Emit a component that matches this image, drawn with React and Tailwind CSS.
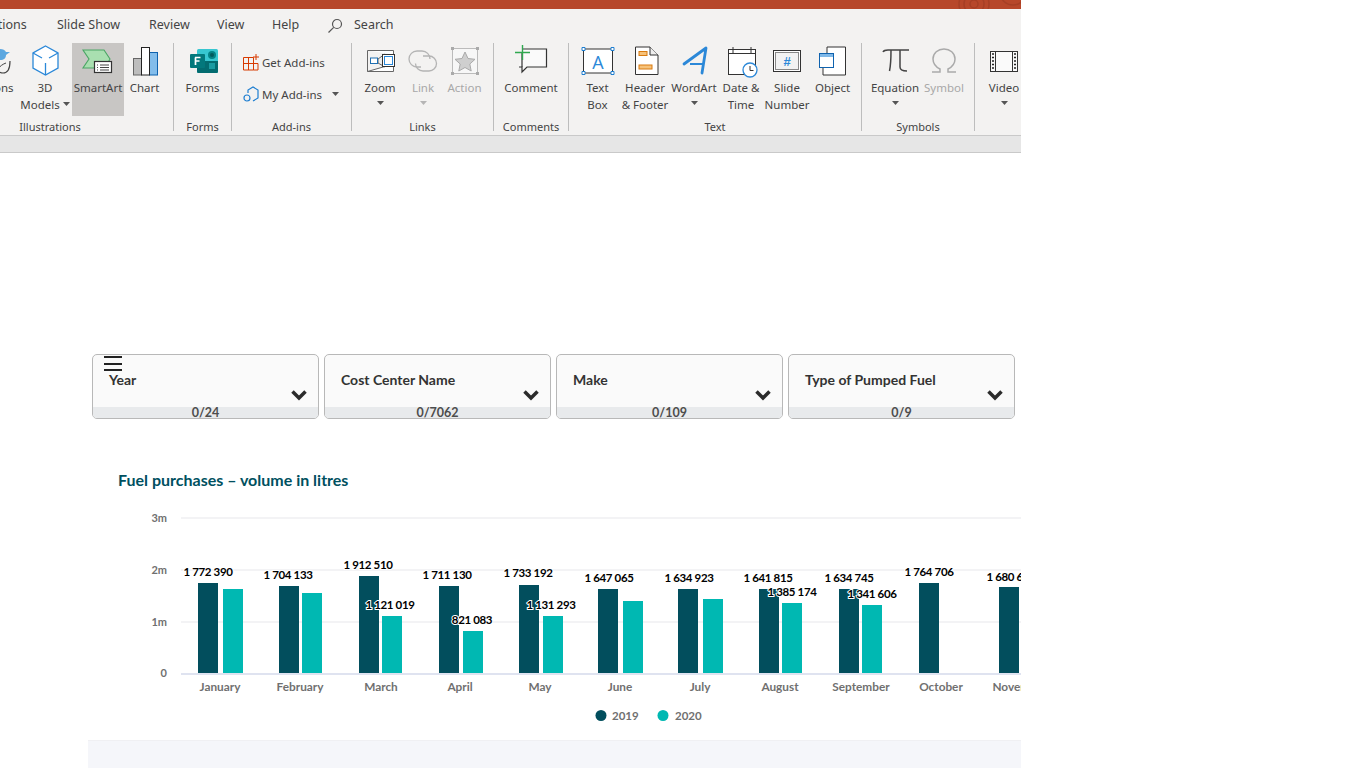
import React from 'react';

const Caret = ({ light }) => (
  <svg width="7" height="4" viewBox="0 0 7 4" className="inline-block">
    <path d="M0 0h7L3.5 4z" fill={light ? '#b5b5b5' : '#555'} />
  </svg>
);

// every ribbon icon is a 32x32 box centred over its label
const Icon = ({ children }) => (
  <svg width="32" height="32" viewBox="0 0 32 32" fill="none" className="overflow-visible">
    {children}
  </svg>
);

const icons = {
  partial: (
    <Icon>
      <path d="M17 4c3 0 5 1 6 3l4 0-4 3c0 3-2 5-6 5-3 0-5-2-5-5s2-6 5-6z" fill="#5ba7e0" />
      <path d="M11 15c0 7 3 13 9 13 5 0 7-5 7-12" stroke="#444" strokeWidth="1.2" />
      <path d="M15 24c2-3 5-5 8-6" stroke="#444" strokeWidth="1" />
    </Icon>
  ),
  cube: (
    <Icon>
      <path d="M16.5 1 29 8v15l-12.500 7L4 23V8z" fill="#fff" stroke="#2b88d8" strokeWidth="1.3" />
      <path d="M4 8l9 5M29 8l-9 5M16.500 18v12" stroke="#2b88d8" strokeWidth="1.3" />
    </Icon>
  ),
  smartArt: (
    <Icon>
      <path d="M1 5h21l6 9-5 9H1l6-9z" fill="#a9dfb0" stroke="#4aa564" strokeWidth="1.1" />
      <rect x="12.500" y="16.500" width="17" height="11" fill="#fff" stroke="#333" strokeWidth="1.2" />
      <path d="M15 20h1M18 20h9M15 22.500h1M18 22.500h9M15 25h1M18 25h9" stroke="#444" />
    </Icon>
  ),
  chart: (
    <Icon>
      <rect x="4.500" y="13.500" width="8" height="16.500" fill="#bdbdbd" stroke="#666" />
      <rect x="20.500" y="7.500" width="8" height="22.500" fill="#83bdeb" stroke="#0f62ae" />
      <rect x="12.500" y="2.500" width="8" height="27.500" fill="#fff" stroke="#222" />
    </Icon>
  ),
  forms: (
    <Icon>
      <rect x="10" y="4" width="21" height="24" rx="1.500" fill="#37c6d0" />
      <path d="M10 16h21v10.500a1.500 1.500 0 0 1-1.500 1.500H11.500A1.500 1.500 0 0 1 10 26.500z" fill="#036c70" />
      <circle cx="25" cy="10" r="4" fill="#038387" />
      <circle cx="25" cy="10" r="2" fill="#025b5e" />
      <rect x="22" y="18" width="6" height="6" fill="#1a9ba1" />
      <rect x="3" y="9" width="15" height="14" rx="1" fill="#03787c" />
      <path d="M8 12.500h5.500M8 16h4.500M8.500 12.500V20" stroke="#fff" strokeWidth="1.700" />
    </Icon>
  ),
  zoom: (
    <Icon>
      <g transform="translate(2 0)">
        <path d="M1.500 5.500h26v4M27.500 19v7.500h-26z" stroke="#666" fill="#fff" />
        <path d="M1.500 5.500v21" stroke="#666" />
        <path d="M12 14 19 9v13l-7-4z" fill="#eee" stroke="#666" />
        <rect x="4.500" y="13" width="7" height="5.500" fill="#fff" stroke="#1f6fb2" />
        <rect x="16.500" y="9.500" width="12" height="12" fill="#fff" stroke="#333" />
        <rect x="18.500" y="11.500" width="8" height="8" fill="#fff" stroke="#2b88d8" />
      </g>
    </Icon>
  ),
  link: (
    <Icon>
      <path d="M14 22h-4A8 8 0 0 1 10 6h5a8 8 0 0 1 8 8" stroke="#b4b4b4" strokeWidth="1.300" />
      <path d="M16 11h6a7.500 7.500 0 0 1 0 15h-6a7.500 7.500 0 0 1-7.500-7.500" stroke="#b4b4b4" strokeWidth="1.300" />
    </Icon>
  ),
  action: (
    <Icon>
      <rect x="3.500" y="3.500" width="25" height="25" stroke="#bbb" fill="#f7f7f7" />
      <path d="M16 7l3 6.500 7 .8-5.200 4.700 1.400 7L16 22.500 9.800 26l1.400-7L6 14.300l7-.8z" fill="#cfcfcf" stroke="#aaa" />
      <path d="M2 2h3v3H2zM27 2h3v3h-3zM2 27h3v3H2zM27 27h3v3h-3z" fill="#aaa" />
    </Icon>
  ),
  comment: (
    <Icon>
      <path d="M7 4h24.500v18H12l-5 5v-5H4" fill="#fafafa" stroke="#333" strokeWidth="1.200" />
      <path d="M7 7v15" stroke="#333" strokeWidth="1.200" />
      <path d="M0 7.500h15M7.500 0v15" stroke="#2fa84f" strokeWidth="1.400" />
    </Icon>
  ),
  textBox: (
    <Icon>
      <rect x="1.500" y="4" width="29" height="24" fill="#fff" stroke="#333" />
      <path d="M0 2.500h3v3H0zM29 2.500h3v3h-3zM0 26.500h3v3H0zM29 26.500h3v3h-3z" fill="#fff" stroke="#1f7fd1" />
      <text x="16" y="24" textAnchor="middle" fontFamily="Open Sans, sans-serif" fontSize="18" fill="#2b88d8">A</text>
    </Icon>
  ),
  header: (
    <Icon>
      <path d="M6.500 2.500H21l8 8v19.500H6.500z" fill="#fff" stroke="#333" transform="translate(0 -.5)" />
      <path d="M21 2v8h8" stroke="#333" fill="#eee" />
      <rect x="10" y="6.500" width="8" height="4" fill="#f6c27a" stroke="#d97b10" />
      <rect x="10" y="20" width="13" height="4" fill="#f6c27a" stroke="#d97b10" />
    </Icon>
  ),
  wordArt: (
    <Icon>
      <path d="M6 19 28 3l-4 25" stroke="#2b88d8" strokeWidth="2.800" strokeLinecap="round" strokeLinejoin="round" />
      <path d="M12 19h14" stroke="#2b88d8" strokeWidth="2" />
    </Icon>
  ),
  date: (
    <Icon>
      <rect x="3.500" y="4.500" width="27" height="25" fill="#fff" stroke="#333" />
      <path d="M3.500 8.500h27M8 2v6M26 2v6" stroke="#333" />
      <circle cx="25" cy="25" r="7" fill="#fff" stroke="#2b88d8" strokeWidth="1.300" />
      <path d="M25 21v4.500h3.500" stroke="#333" />
    </Icon>
  ),
  slide: (
    <Icon>
      <rect x="2.500" y="5.500" width="27" height="21" fill="#fff" stroke="#333" />
      <rect x="4.500" y="7.500" width="23" height="17" fill="#f2f2f2" stroke="#888" />
      <text x="16" y="21" textAnchor="middle" fontFamily="Liberation Sans, sans-serif" fontWeight="700" fontSize="13" fill="#2b88d8">#</text>
    </Icon>
  ),
  object: (
    <Icon>
      <path d="M6 21v9h22.500V2H10v7" fill="#fff" stroke="#333" />
      <rect x="2.500" y="8.500" width="14" height="14" fill="#fff" stroke="#0f62ae" />
      <rect x="3" y="9" width="13" height="3" fill="#7fb8e8" />
    </Icon>
  ),
  pi: (
    <Icon>
      <path d="M4 7c1-2 3-2 5-2h21M12 5c0 8 0 14-1.500 21M21 5v17c0 3 2 4 7 4" stroke="#444" strokeWidth="1.500" />
    </Icon>
  ),
  omega: (
    <Icon>
      <path d="M4 27h8v-3c-4-2-7-5-7-10C5 8 10 4 16 4s11 4 11 10c0 5-3 8-7 10v3h8" stroke="#aaa" strokeWidth="1.500" />
    </Icon>
  ),
  video: (
    <Icon>
      <rect x="2.500" y="6.500" width="27" height="20" fill="#fafafa" stroke="#333" />
      <path d="M7.500 7v19M24.500 7v19" stroke="#333" />
      <path d="M4 9h2M4 12.500h2M4 16h2M4 19.500h2M4 23h2M26 9h2M26 12.500h2M26 16h2M26 19.500h2M26 23h2" stroke="#222" strokeWidth="1.500" />
    </Icon>
  ),
};

const RibbonButton = ({ icon, lines, width, caret, inlineCaret, disabled, active, className }) => (
  <div
    className={`flex flex-col items-center shrink-0 h-[73px] ${width} ${active ? 'bg-[#c8c6c4]' : ''} ${disabled ? 'text-[#a8a8a8]' : 'text-[#444]'} ${className || ''}`}
  >
    <div className="h-[36px] pt-[2px]">{icons[icon]}</div>
    {lines.map((line, i) => (
      <div key={line} className="h-[17px] leading-[17px] whitespace-nowrap">
        {line}
        {inlineCaret && i === lines.length - 1 && <span className="ml-[3px] relative top-[-2px]"><Caret /></span>}
      </div>
    ))}
    {caret && <div className="h-[16px] leading-[12px]"><Caret light={disabled} /></div>}
  </div>
);

const RibbonGroup = ({ label, width, children, className }) => (
  <>
    <div className={`flex flex-col shrink-0 ${width}`}>
      <div className={`flex h-[74px] mt-px ${className || ''}`}>{children}</div>
      <div className="text-[11px] leading-[16px] mt-[2px] text-center text-[#444]">{label}</div>
    </div>
    <div className="w-px h-[88px] mt-px bg-[#bdbdbd] shrink-0" />
  </>
);

const Ribbon = () => (
  <div className="w-[1021px] overflow-hidden" style={{ fontFamily: '"Noto Sans", sans-serif' }}>
    <div className="h-[9px] bg-[#b7472a] relative overflow-hidden">
      <svg width="80" height="9" className="absolute left-[950px] top-0" fill="none" stroke="#a63f25" strokeWidth="1.500">
        <circle cx="24" cy="4" r="4" />
        <circle cx="24" cy="4" r="10" />
        <circle cx="24" cy="4" r="15" />
        <circle cx="63" cy="-8" r="13" />
      </svg>
    </div>
    <div className="bg-[#f3f2f1] border-b border-[#c9c9c9]">
      <div className="h-[33px] flex items-center text-[12.5px] text-[#444] ml-[-40px]">
        <span className="w-[97px]">Animations</span>
        <span className="w-[92px]">Slide Show</span>
        <span className="w-[68px]">Review</span>
        <span className="w-[55px]">View</span>
        <span className="w-[55px]">Help</span>
        <svg width="16" height="16" viewBox="0 0 16 16" fill="none" stroke="#555" strokeWidth="1.200">
          <circle cx="10" cy="6" r="4.500" />
          <path d="M6.700 9.300 1.500 14.500" />
        </svg>
        <span className="ml-[11px]">Search</span>
      </div>
      <div className="h-[93px] flex text-[11.5px]">
        <RibbonGroup label="Illustrations" width="w-[246px] ml-[-73px]" className="pl-[52px]">
          <RibbonButton icon="partial" lines={['Icons']} width="w-[40px]" />
          <RibbonButton icon="cube" lines={['3D', 'Models']} inlineCaret width="w-[52px]" />
          <RibbonButton icon="smartArt" lines={['SmartArt']} width="w-[52px]" className="ml-px" active />
          <RibbonButton icon="chart" lines={['Chart']} width="w-[41px]" />
        </RibbonGroup>
        <RibbonGroup label="Forms" width="w-[57px]">
          <RibbonButton icon="forms" lines={['Forms']} width="w-[57px]" />
        </RibbonGroup>
        <RibbonGroup label="Add-ins" width="w-[119px]" className="flex-col pl-[11px] pt-[10px] gap-[13px] text-[#444]">
          <div className="flex items-center h-[19px]">
            <svg width="16" height="17" viewBox="0 0 16 17" fill="none" stroke="#d83b01" className="mr-[3px]">
              <path d="M.5 3.500h10v12.500H.5zM.5 9.500h14.500v6.500h-4.500M5.500 3.500v12.500M13 0v6M10 3h6" />
            </svg>
            Get Add-ins
          </div>
          <div className="flex items-center h-[19px]">
            <svg width="17" height="17" viewBox="0 0 17 17" fill="none" stroke="#1f7fd1" strokeWidth="1.200" className="mr-[2px]">
              <path d="M5 7V4l5-3 5 3v8l-5 3" />
              <circle cx="4" cy="12" r="3" />
            </svg>
            My Add-ins
            <span className="ml-[10px] relative top-[-2px]"><Caret /></span>
          </div>
        </RibbonGroup>
        <RibbonGroup label="Links" width="w-[141px]" className="pl-[6px]">
          <RibbonButton icon="zoom" lines={['Zoom']} caret width="w-[44px]" />
          <RibbonButton icon="link" lines={['Link']} caret disabled width="w-[42px]" />
          <RibbonButton icon="action" lines={['Action']} disabled width="w-[41px]" />
        </RibbonGroup>
        <RibbonGroup label="Comments" width="w-[74px]">
          <RibbonButton icon="comment" lines={['Comment']} width="w-[74px]" />
        </RibbonGroup>
        <RibbonGroup label="Text" width="w-[292px]" className="pl-[6px]">
          <RibbonButton icon="textBox" lines={['Text', 'Box']} width="w-[45px]" />
          <RibbonButton icon="header" lines={['Header', '& Footer']} width="w-[50px]" />
          <RibbonButton icon="wordArt" lines={['WordArt']} caret width="w-[48px]" />
          <RibbonButton icon="date" lines={['Date &', 'Time']} width="w-[46px]" />
          <RibbonButton icon="slide" lines={['Slide', 'Number']} width="w-[46px]" />
          <RibbonButton icon="object" lines={['Object']} width="w-[45px]" />
        </RibbonGroup>
        <RibbonGroup label="Symbols" width="w-[112px]" className="pl-[6px]">
          <RibbonButton icon="pi" lines={['Equation']} caret width="w-[54px]" />
          <RibbonButton icon="omega" lines={['Symbol']} disabled width="w-[44px]" />
        </RibbonGroup>
        <div className="pl-[8px] mt-px">
          <RibbonButton icon="video" lines={['Video']} caret width="w-[42px]" />
        </div>
      </div>
    </div>
    <div className="h-[17px] bg-[#e6e6e6] border-b border-[#c9c9c9]" />
  </div>
);

const filters = [
  { name: 'Year', count: '0/24' },
  { name: 'Cost Center Name', count: '0/7062' },
  { name: 'Make', count: '0/109' },
  { name: 'Type of Pumped Fuel', count: '0/9' },
];

const FilterCard = ({ name, count }) => (
  <div className="w-[227px] h-[65px] rounded-[5px] border border-[#b8b8b8] bg-[#fafafa] overflow-hidden flex flex-col">
    <div className="h-[52px] flex-1 pl-[16px] pr-[11px] pt-[16px] relative">
      <div className="text-[14px] leading-[18px] font-bold text-[#333]">{name}</div>
      <svg width="16" height="11" viewBox="0 0 16 11" fill="none" stroke="#2b2b2b" strokeWidth="3.500" className="absolute right-[11px] top-[35px]">
        <path d="M1.500 1.500 8 8l6.500-6.500" />
      </svg>
    </div>
    <div className="h-[11px] bg-[#e8eaec] text-center text-[12.5px] leading-[11px] font-bold text-[#4d4d4d]">{count}</div>
  </div>
);

const months = [
  { name: 'January', cx: 220, a: [198, 583], b: [223, 589] },
  { name: 'February', cx: 300, a: [279, 586], b: [302, 593] },
  { name: 'March', cx: 381, a: [359, 576], b: [382, 616] },
  { name: 'April', cx: 460, a: [439, 586], b: [463, 631] },
  { name: 'May', cx: 540, a: [519, 585], b: [543, 616] },
  { name: 'June', cx: 620, a: [598, 589], b: [623, 601] },
  { name: 'July', cx: 700, a: [678, 589], b: [703, 599] },
  { name: 'August', cx: 780, a: [759, 589], b: [782, 603] },
  { name: 'September', cx: 861, a: [839, 589], b: [862, 605] },
  { name: 'October', cx: 941, a: [919, 583] },
  { name: 'November', cx: 1020, a: [999, 587] },
];

const values = [
  ['1 772 390', 208, 576],
  ['1 704 133', 288, 579],
  ['1 912 510', 368, 569],
  ['1 711 130', 447, 579],
  ['1 733 192', 528, 577],
  ['1 121 019', 390, 609],
  ['821 083', 472, 624],
  ['1 131 293', 551, 609],
  ['1 647 065', 609, 582],
  ['1 634 923', 689, 582],
  ['1 641 815', 768, 582],
  ['1 385 174', 792, 596],
  ['1 634 745', 849, 582],
  ['1 341 606', 872, 598],
  ['1 764 706', 929, 576],
  ['1 680 674', 1011, 581],
];

const Chart = () => (
  <svg viewBox="0 500 1021 240" className="block w-[1021px] h-[240px]">
    {[518, 570, 622].map((y) => (
      <rect key={y} x="181" y={y - 1} width="840" height="2" fill="#f3f3f5" />
    ))}
    <rect x="181" y="673" width="840" height="2" fill="#dfe3f0" />
    {[['3m', 518], ['2m', 570], ['1m', 622], ['0', 673]].map(([t, y]) => (
      <text key={t} x="167" y={y + 4} textAnchor="end" fontSize="11" fontWeight="700" fill="#707070">{t}</text>
    ))}
    {months.map((m) => (
      <g key={m.name}>
        <rect x={m.a[0]} y={m.a[1]} width="20" height={673 - m.a[1]} fill="#024e5d" />
        {m.b && <rect x={m.b[0]} y={m.b[1]} width="20" height={673 - m.b[1]} fill="#00b8b2" />}
        <text x={m.cx} y="691" textAnchor="middle" fontSize="11.800" fontWeight="700" fill="#707070">{m.name}</text>
      </g>
    ))}
    {values.map(([t, x, y]) => (
      <text
        key={t}
        x={x}
        y={y}
        textAnchor="middle"
        fontSize="11.500"
        fontWeight="700"
        letterSpacing="-0.35"
        className="fill-black stroke-white [stroke-width:2px] [paint-order:stroke]"
      >
        {t}
      </text>
    ))}
    <circle cx="601" cy="715.500" r="5.500" fill="#024e5d" />
    <text x="612" y="720" fontSize="11.500" fontWeight="700" fill="#707070">2019</text>
    <circle cx="663" cy="715.500" r="5.500" fill="#00b8b2" />
    <text x="675" y="720" fontSize="11.500" fontWeight="700" fill="#707070">2020</text>
  </svg>
);

export default function App() {
  return (
    <div className="h-[768px] overflow-hidden bg-white">
      <Ribbon />
      <div className="w-[1021px] overflow-hidden" style={{ fontFamily: 'Lato, sans-serif' }}>
        <div className="relative flex gap-[5px] pl-[92px] pt-[201px]">
          {filters.map((f) => (
            <FilterCard key={f.name} name={f.name} count={f.count} />
          ))}
          <div className="absolute left-[104px] top-[203px] w-[18px] flex flex-col gap-[4.500px]">
            <div className="h-[2px] bg-[#222]" />
            <div className="h-[2px] bg-[#222]" />
            <div className="h-[2px] bg-[#222]" />
          </div>
        </div>
        <h2 className="pl-[118px] mt-[51px] text-[16px] leading-[20px] font-bold text-[#00505f]">
          Fuel purchases – volume in litres
        </h2>
        <div className="mt-[10px]">
          <Chart />
        </div>
        <div className="ml-[88px] h-[28px] bg-[#f5f6fa] border-t border-[#f0f0f3]" />
      </div>
    </div>
  );
}
